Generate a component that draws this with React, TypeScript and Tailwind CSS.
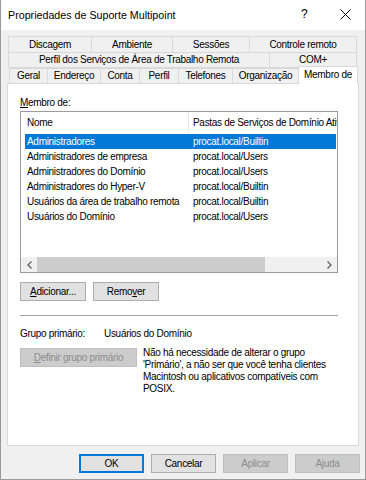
import React from "react";

const rows: [string, string][] = [
  ["Administradores", "procat.local/Builtin"],
  ["Administradores de empresa", "procat.local/Users"],
  ["Administradores do Domínio", "procat.local/Users"],
  ["Administradores do Hyper-V", "procat.local/Builtin"],
  ["Usuários da área de trabalho remota", "procat.local/Builtin"],
  ["Usuários do Domínio", "procat.local/Users"],
];

function Btn({
  children,
  w,
  disabled,
  primary,
}: {
  children: React.ReactNode;
  w: string;
  disabled?: boolean;
  primary?: boolean;
}) {
  const base = "h-[19px] flex items-center justify-center shrink-0 leading-none";
  if (primary)
    return <div className={`${base} ${w} bg-[#e1e1e1] border-2 border-[#0078d7]`}>{children}</div>;
  if (disabled)
    return <div className={`${base} ${w} bg-[#cccccc] border border-[#bfbfbf] text-[#8d8d8d]`}>{children}</div>;
  return <div className={`${base} ${w} bg-[#e1e1e1] border border-[#adadad]`}>{children}</div>;
}

export default function App() {
  return (
    <div className="w-[366px] h-[480px] bg-[#f0f0f0] border-l border-r border-b border-[#9a9a9a] flex flex-col text-black text-[10px] tracking-[-0.3px] font-['Liberation_Sans',Arial,sans-serif] leading-none overflow-hidden">
      {/* Title bar */}
      <div className="h-[30px] bg-white flex items-center shrink-0 relative tracking-normal">
        <span className="ml-[7px] text-[10.7px]">Propriedades de Suporte Multipoint</span>
        <span className="absolute left-[300px] top-[8px] text-[12px]">?</span>
        <svg className="absolute left-[339px] top-[9px]" width="11" height="11" viewBox="0 0 11 11">
          <path d="M0.5 0.5 L10.5 10.5 M10.5 0.5 L0.5 10.5" stroke="#000" strokeWidth="1" fill="none" />
        </svg>
      </div>

      {/* Tabs */}
      <div className="mt-[6px] ml-[7px] w-[349px] h-[17px] flex border border-[#d9d9d9] shrink-0">
        <div className="w-[83px] border-r border-[#d9d9d9] flex items-center justify-center">Discagem</div>
        <div className="w-[81px] border-r border-[#d9d9d9] flex items-center justify-center">Ambiente</div>
        <div className="w-[77px] border-r border-[#d9d9d9] flex items-center justify-center">Sessões</div>
        <div className="flex-1 flex items-center justify-center">Controle remoto</div>
      </div>
      <div className="-mt-px ml-[7px] w-[349px] h-[16px] flex border border-[#d9d9d9] shrink-0">
        <div className="w-[261px] border-r border-[#d9d9d9] flex items-center justify-center">
          Perfil dos Serviços de Área de Trabalho Remota
        </div>
        <div className="flex-1 flex items-center justify-center">COM+</div>
      </div>
      <div className="ml-[8px] h-[15px] flex items-end shrink-0 relative z-10">
        <div className="w-[38px] h-[15px] border-l border-t border-[#d9d9d9] flex items-center justify-center">Geral</div>
        <div className="w-[53px] h-[15px] border-l border-t border-[#d9d9d9] flex items-center justify-center">Endereço</div>
        <div className="w-[39px] h-[15px] border-l border-t border-[#d9d9d9] flex items-center justify-center">Conta</div>
        <div className="w-[39px] h-[15px] border-l border-t border-[#d9d9d9] flex items-center justify-center">Perfil</div>
        <div className="w-[54px] h-[15px] border-l border-t border-[#d9d9d9] flex items-center justify-center">Telefones</div>
        <div className="w-[66px] h-[15px] border-l border-t border-[#d9d9d9] flex items-center justify-center">Organização</div>
        <div className="w-[60px] h-[18px] -mb-px bg-white border-l border-t border-r border-[#d9d9d9] flex items-start justify-center pt-[3px] whitespace-nowrap">
          Membro de
        </div>
      </div>

      {/* Panel */}
      <div className="ml-[6px] w-[352px] h-[363px] bg-white border border-[#d9d9d9] shrink-0 flex flex-col pl-[12px] pt-[11px]">
        <div className="h-[15px] leading-[15px]">
          <span className="underline underline-offset-[1px]">M</span>embro de:
        </div>
        {/* List */}
        <div className="mt-px w-[318px] h-[162px] border border-[#9c9c9c] flex flex-col bg-white">
          <div className="h-[22px] flex shrink-0">
            <div className="w-[167px] pl-[6px] flex items-center">Nome</div>
            <div className="w-px h-[20px] mt-px bg-[#e5e5e5]" />
            <div className="flex-1 pl-[4px] flex items-center overflow-hidden whitespace-nowrap">
              Pastas de Serviços de Domínio Ativo
            </div>
          </div>
          <div className="flex-1 flex flex-col">
            {rows.map(([a, b], i) => (
              <div
                key={i}
                className={`h-[15px] ml-[4px] mr-px flex items-center whitespace-nowrap ${
                  i === 0 ? "bg-[#0078d7] text-white" : ""
                }`}
              >
                <div className="w-[168px] pl-[2px]">{a}</div>
                <div>{b}</div>
              </div>
            ))}
          </div>
          {/* Scrollbar */}
          <div className="h-[15px] flex bg-[#f0f0f0] shrink-0">
            <div className="w-[16px] flex items-center justify-center">
              <svg width="5" height="8" viewBox="0 0 5 8">
                <path d="M4.5 0.5 L1 4 L4.5 7.5" stroke="#606060" strokeWidth="1.3" fill="none" />
              </svg>
            </div>
            <div className="w-[228px] bg-[#cdcdcd]" />
            <div className="flex-1" />
            <div className="w-[16px] flex items-center justify-center">
              <svg width="5" height="8" viewBox="0 0 5 8">
                <path d="M0.5 0.5 L4 4 L0.5 7.5" stroke="#606060" strokeWidth="1.3" fill="none" />
              </svg>
            </div>
          </div>
        </div>

        <div className="mt-[9px] flex gap-[7px]">
          <Btn w="w-[66px]">
            <span>
              <span className="underline underline-offset-[1px]">A</span>dicionar...
            </span>
          </Btn>
          <Btn w="w-[66px]">
            <span>
              Remo<span className="underline underline-offset-[1px]">v</span>er
            </span>
          </Btn>
        </div>

        <div className="mt-[14px] w-[318px] h-px bg-[#a0a0a0]" />

        <div className="mt-[10px] h-[15px] flex items-center">
          <div className="w-[84px]">Grupo primário:</div>
          <div>Usuários do Domínio</div>
        </div>

        <div className="mt-[7px] flex items-start">
          <Btn w="w-[117px]" disabled>
            <span>
              <span className="underline underline-offset-[1px]">D</span>efinir grupo primário
            </span>
          </Btn>
          <div className="ml-[6px] -mt-px leading-[12px] whitespace-nowrap">
            Não há necessidade de alterar o grupo
            <br />
            'Primário', a não ser que você tenha clientes
            <br />
            Macintosh ou aplicativos compatíveis com
            <br />
            POSIX.
          </div>
        </div>
      </div>

      {/* Bottom buttons */}
      <div className="mt-[8px] flex justify-end gap-[7px] pr-[5px] shrink-0">
        <Btn w="w-[65px]" primary>
          OK
        </Btn>
        <Btn w="w-[65px]">Cancelar</Btn>
        <Btn w="w-[65px]" disabled>
          Aplicar
        </Btn>
        <Btn w="w-[65px]" disabled>
          Ajuda
        </Btn>
      </div>
    </div>
  );
}
